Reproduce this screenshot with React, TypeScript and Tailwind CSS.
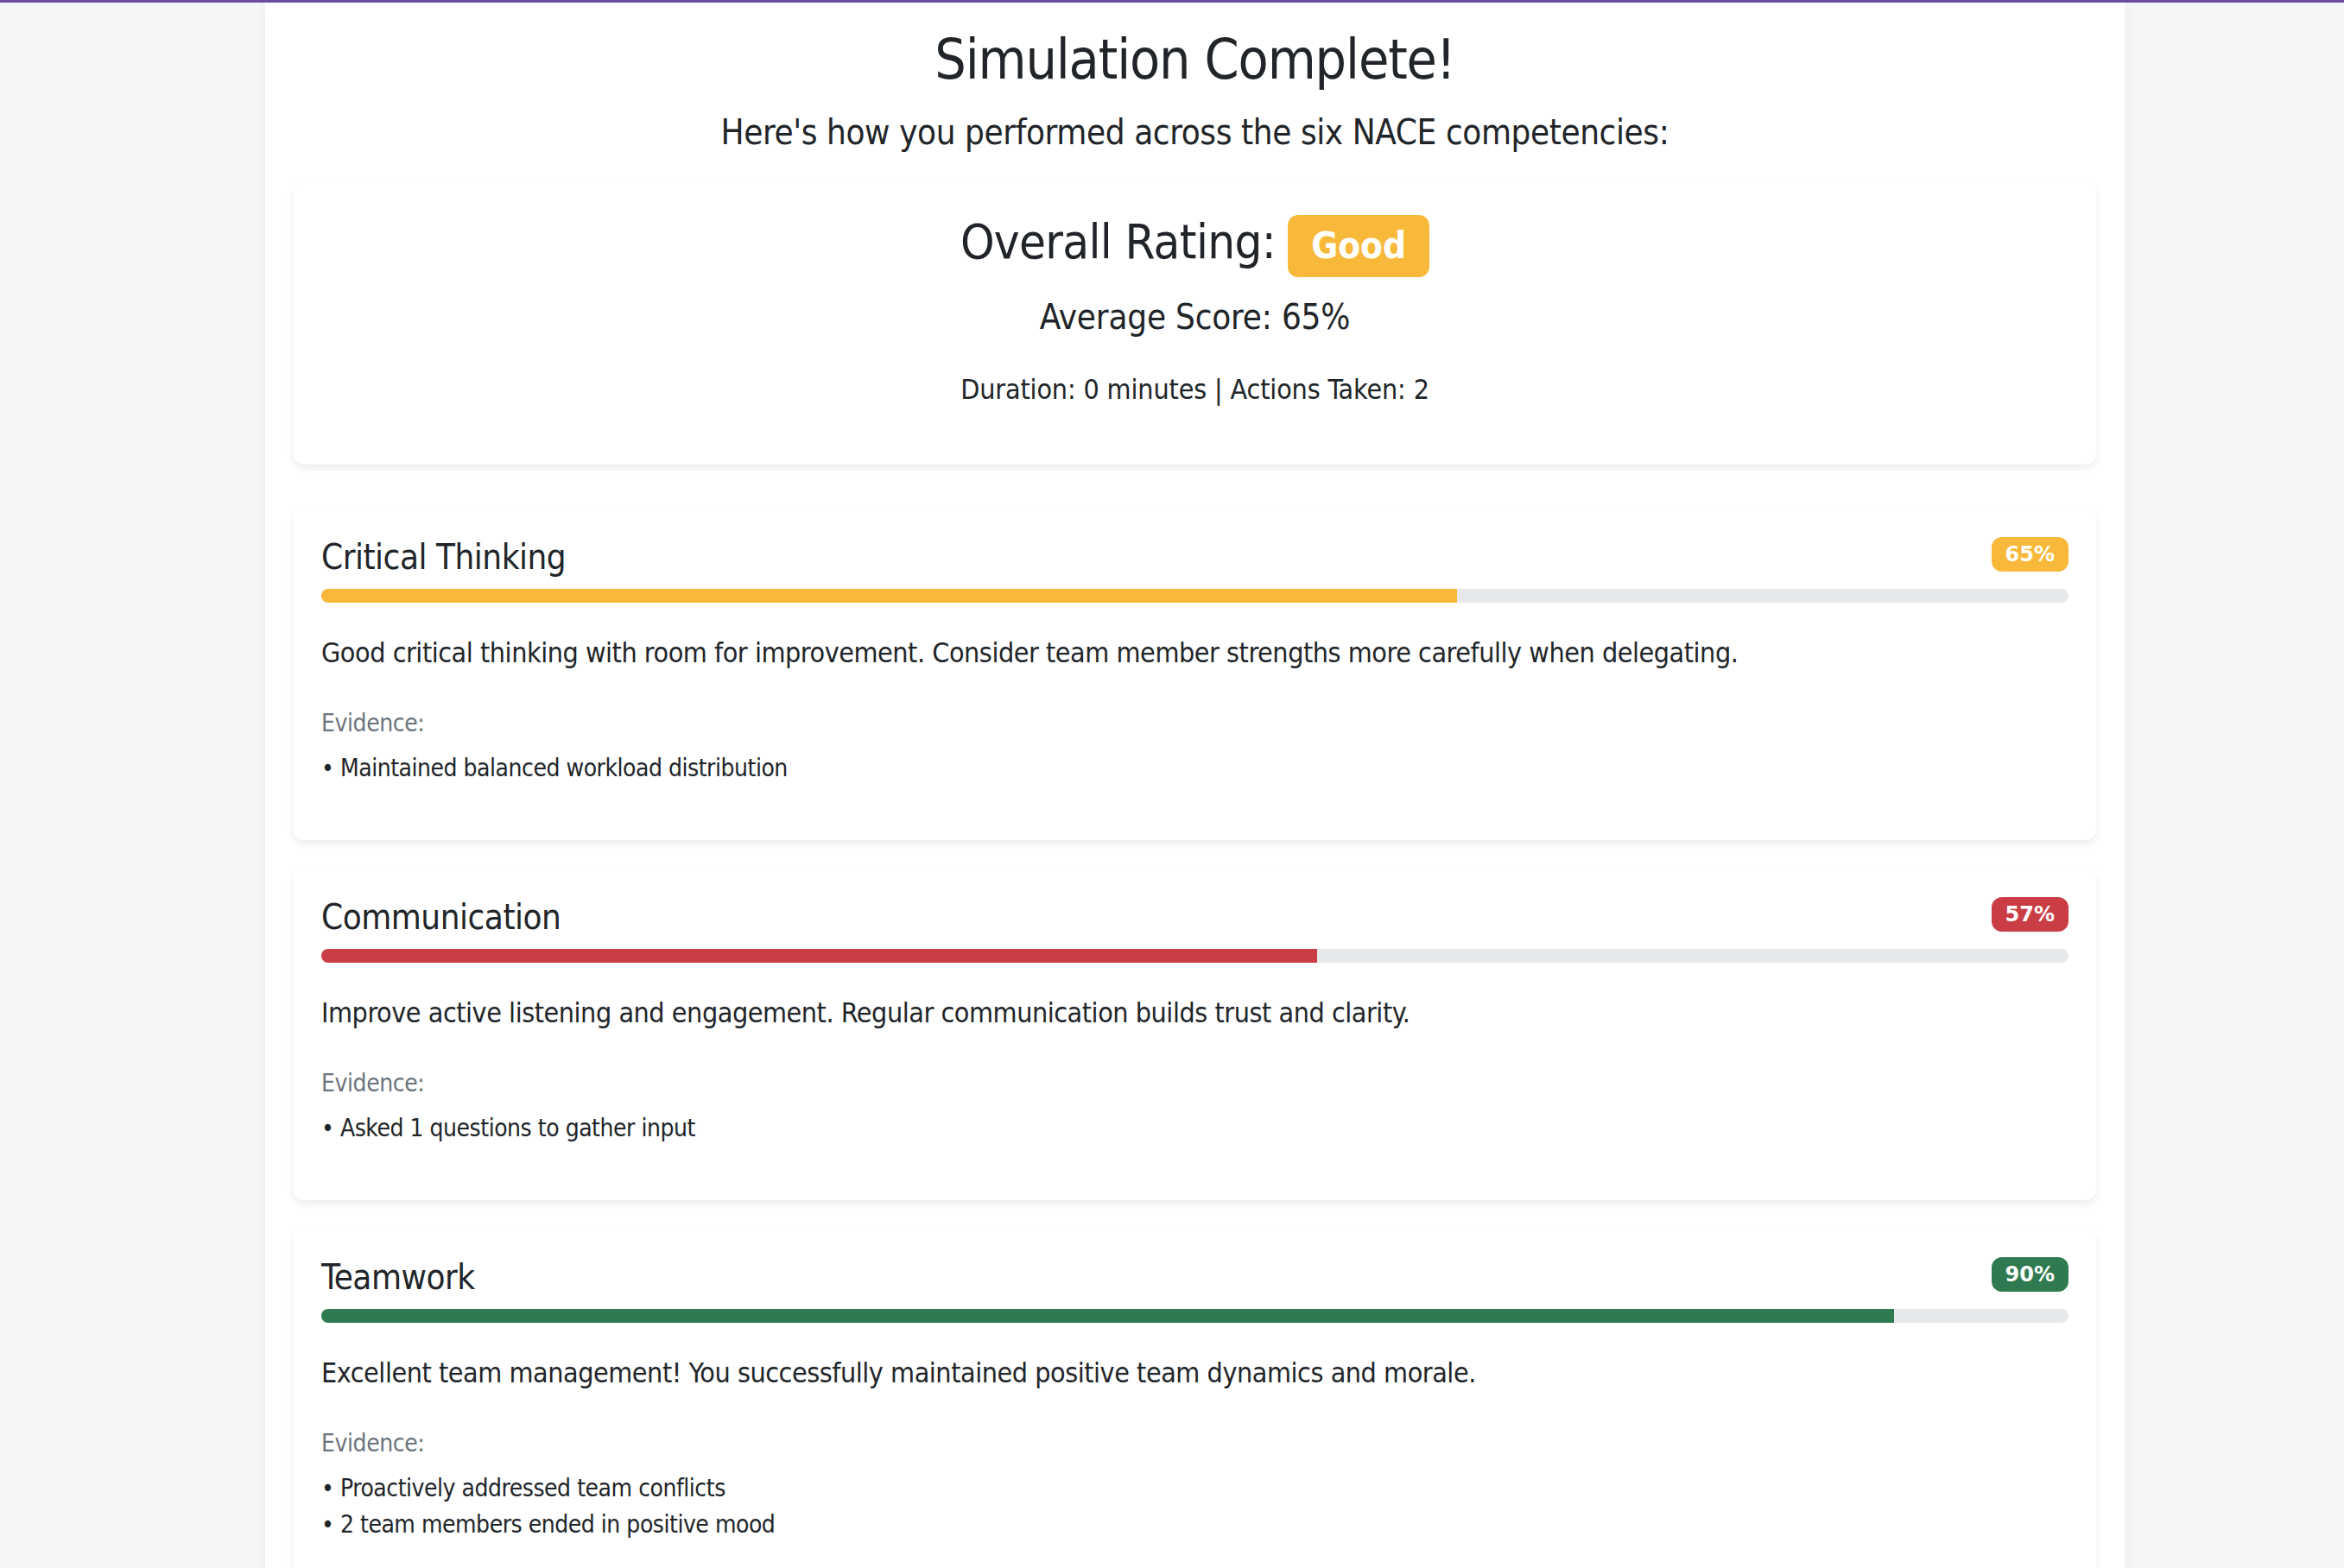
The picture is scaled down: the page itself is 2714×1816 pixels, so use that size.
import React from "react";

type Comp = {
  name: string;
  score: number;
  color: string;
  desc: string;
  evidence: string[];
};

const comps: Comp[] = [
  {
    name: "Critical Thinking",
    score: 65,
    color: "bg-[#f8b93a]",
    desc: "Good critical thinking with room for improvement. Consider team member strengths more carefully when delegating.",
    evidence: ["Maintained balanced workload distribution"],
  },
  {
    name: "Communication",
    score: 57,
    color: "bg-[#cb3d44]",
    desc: "Improve active listening and engagement. Regular communication builds trust and clarity.",
    evidence: ["Asked 1 questions to gather input"],
  },
  {
    name: "Teamwork",
    score: 90,
    color: "bg-[#2f7a50]",
    desc: "Excellent team management! You successfully maintained positive team dynamics and morale.",
    evidence: ["Proactively addressed team conflicts", "2 team members ended in positive mood"],
  },
];

function CompetencyCard({ c }: { c: Comp }) {
  return (
    <div className="mb-[32px] rounded-[12px] bg-white px-[32px] pt-[30px] pb-[62px] shadow-[0_4px_10px_rgba(0,0,0,0.08)]">
      <div className="mb-[16px] flex h-[48px] items-start justify-between">
        <h5 className="mt-[3px] text-[40px] leading-[48px] tracking-[-0.012em]">{c.name}</h5>
        <span
          className={`mt-[4px] inline-block rounded-[12px] px-[16px] py-[8px] font-[family-name:'DejaVu_Sans',sans-serif] font-stretch-normal text-[24px] font-bold leading-none tracking-normal text-white ${c.color}`}
        >
          {c.score}%
        </span>
      </div>
      <div className="mb-[34px] h-[16px] w-full overflow-hidden rounded-full bg-[#e6e9ec]">
        <div className={`h-full ${c.color}`} style={{ width: `${c.score}%` }} />
      </div>
      <p className="mb-[37px] text-[32px] leading-[48px] tracking-[-0.0145em]">{c.desc}</p>
      <div className="mb-[10px] text-[28px] leading-[42px] tracking-[-0.015em] text-[#6c757d]">Evidence:</div>
      <ul className="text-[28px] leading-[42px] tracking-[-0.017em]">
        {c.evidence.map((e) => (
          <li key={e}>• {e}</li>
        ))}
      </ul>
    </div>
  );
}

export default function App() {
  return (
    <div className="h-screen overflow-hidden border-t-[3px] border-[#6a4ca2] bg-[#f5f6f8] font-[family-name:'DejaVu_Sans_Condensed','DejaVu_Sans',sans-serif] font-stretch-condensed tracking-[-0.013em] text-[#212529]">
      <div className="ml-[307px] min-h-full w-[2153px] bg-white px-[33px] pt-[28px] shadow-[0_0_14px_rgba(0,0,0,0.06)]">
        <h1 className="mb-[15px] text-center text-[64px] leading-[1.2] tracking-[-0.018em]">Simulation Complete!</h1>
        <p className="mb-[29px] text-center text-[40px] leading-[60px] tracking-[-0.01em]">
          Here's how you performed across the six NACE competencies:
        </p>

        <div className="mb-[50px] rounded-[12px] bg-white px-[32px] pt-[34px] pb-[63px] text-center shadow-[0_4px_10px_rgba(0,0,0,0.08)]">
          <div className="mb-[22px] flex items-baseline justify-center">
            <h2 className="text-[56px] leading-[1.2] tracking-[-0.012em]">Overall Rating:</h2>
            <span className="ml-[14px] inline-block rounded-[12px] bg-[#f8b93a] px-[27px] py-[15px] text-[42px] font-bold leading-none tracking-normal text-white">
              Good
            </span>
          </div>
          <h5 className="mb-[36px] text-[40px] leading-[48px] tracking-[-0.005em]">Average Score: 65%</h5>
          <p className="text-[32px] leading-[48px] tracking-[-0.005em]">Duration: 0 minutes | Actions Taken: 2</p>
        </div>

        {comps.map((c) => (
          <CompetencyCard key={c.name} c={c} />
        ))}
      </div>
    </div>
  );
}
